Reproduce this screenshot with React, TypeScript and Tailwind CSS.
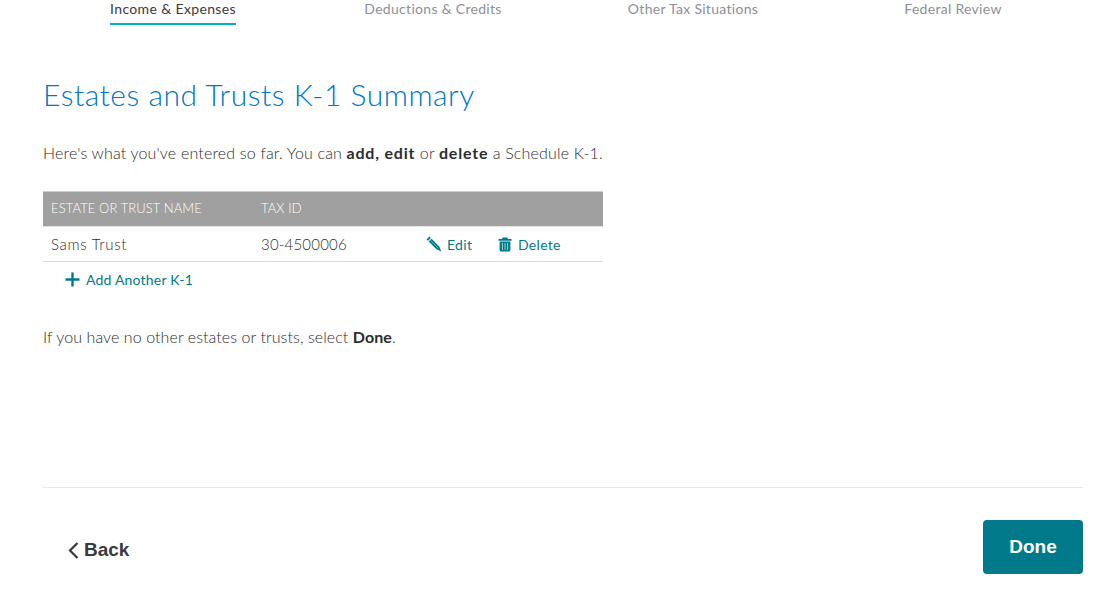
import React from "react";

const Pencil = () => (
  <svg width="16" height="16" viewBox="0 0 16 16" className="block">
    <path d="M3.4 0.6 L4.8 2 L2 4.8 L0.6 3.4 Z" fill="#007a8a" />
    <path d="M5.5 2.7 L13.2 10.4 L15.4 15.4 L10.4 13.2 L2.7 5.5 Z" fill="#007a8a" />
    <path d="M4.4 4.4 L12.4 12.4" stroke="#fff" strokeWidth="0.7" opacity="0.6" />
  </svg>
);

const Trash = () => (
  <svg width="14" height="15" viewBox="0 0 14 15" className="block">
    <path d="M4.6 0.4 H9.4 L10 2 H13.5 V3.8 H0.5 V2 H4 Z" fill="#007a8a" />
    <path d="M1.6 4.6 H12.4 V13 Q12.4 14.6 10.8 14.6 H3.2 Q1.6 14.6 1.6 13 Z" fill="#007a8a" />
    <path d="M4.4 6 V13 M7 6 V13 M9.6 6 V13" stroke="#fff" strokeWidth="0.8" opacity="0.8" />
  </svg>
);

const Plus = () => (
  <svg width="15" height="15" viewBox="0 0 15 15" className="block">
    <path d="M7.5 0.5 V14.5 M0.5 7.5 H14.5" stroke="#007a8a" strokeWidth="2.4" />
  </svg>
);

const Chevron = () => (
  <svg width="11" height="17" viewBox="0 0 11 17" className="block">
    <path d="M9.5 1 L2 8.5 L9.5 16" fill="none" stroke="#393a3d" strokeWidth="2.2" />
  </svg>
);

const steps = ["Income & Expenses", "Deductions & Credits", "Other Tax Situations", "Federal Review"];

export default function App() {
  return (
    <div className="h-[598px] w-[1115px] overflow-hidden bg-white px-[43px] font-['Lato',sans-serif] text-[#2c2d30]">
      <nav className="grid h-[25px] w-[1040px] grid-cols-4">
        {steps.map((s, i) => (
          <div key={s} className="flex justify-center">
            <div
              className={
                i === 0
                  ? "h-[25px] border-b-2 border-[#00b1c6] text-[14px] leading-[17px] tracking-[0.36px] text-[#393a3d]"
                  : "text-[14px] leading-[17px] tracking-[0.3px] text-[#8d9096]"
              }
            >
              {s}
            </div>
          </div>
        ))}
      </nav>

      <h1 className="mt-[49px] text-[30px] leading-[40px] font-light tracking-[0.52px] text-[#0077c5]">
        Estates and Trusts K-1 Summary
      </h1>

      <p className="mt-[29px] text-[16px] leading-[20px] font-light tracking-[0.17px]">
        Here's what you've entered so far. You can <b className="font-bold tracking-[0.8px]">add, edit</b> or{" "}
        <b className="font-bold tracking-[0.8px]">delete</b> a Schedule K-1.
      </p>

      <div className="mt-[28px] w-[560px]">
        <div className="flex h-[36px] items-center border-y border-t-[#cfcfcf] border-b-[#e3e3e3] bg-[#a0a0a0] text-[13px] font-light tracking-[0.1px] text-white">
          <div className="w-[218px] pl-[8px]">ESTATE OR TRUST NAME</div>
          <div>TAX ID</div>
        </div>
        <div className="flex h-[35px] items-center border-b border-[#dcdcdc] text-[15px]">
          <div className="w-[218px] pl-[8px] font-light tracking-[0.7px]">Sams Trust</div>
          <div className="w-[165px] font-light tracking-[0.2px]">30-4500006</div>
          <div className="flex w-[72px] items-center gap-[5px] text-[14px] tracking-[0.3px] text-[#007a8a]">
            <Pencil />
            <span>Edit</span>
          </div>
          <div className="flex items-center gap-[6px] text-[14px] tracking-[0.3px] text-[#007a8a]">
            <Trash />
            <span>Delete</span>
          </div>
        </div>
        <div className="flex h-[34px] items-center gap-[6px] pl-[22px] text-[14px] tracking-[0.2px] text-[#007a8a]">
          <Plus />
          <span>Add Another K-1</span>
        </div>
      </div>

      <p className="mt-[31px] text-[16px] leading-[20px] font-light tracking-[0.08px]">
        If you have no other estates or trusts, select <b className="font-bold">Done</b>.
      </p>

      <div className="mt-[140px] h-px w-[1040px] bg-[#e8e8e8]" />

      <div className="mt-[32px] flex w-[1040px] items-center justify-between">
        <div className="ml-[25px] flex items-center gap-[5px] pt-[7px] font-['Liberation_Sans',sans-serif] font-bold text-[#393a3d]">
          <Chevron />
          <span className="text-[19px]">Back</span>
        </div>
        <button className="h-[54px] w-[100px] rounded-[4px] bg-[#007a8a] font-['Liberation_Sans',sans-serif] text-[19px] font-bold text-white">
          Done
        </button>
      </div>
    </div>
  );
}
